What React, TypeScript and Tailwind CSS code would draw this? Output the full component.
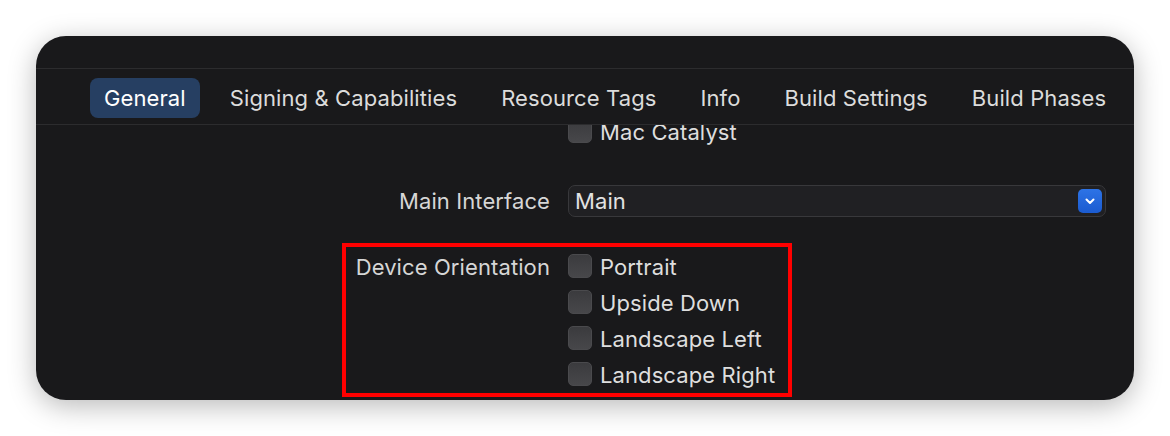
import React from "react";

const tabs = [
  "General",
  "Signing & Capabilities",
  "Resource Tags",
  "Info",
  "Build Settings",
  "Build Phases",
];

const orientations = ["Portrait", "Upside Down", "Landscape Left", "Landscape Right"];

function Checkbox() {
  return (
    <div className="h-[24px] w-[24px] shrink-0 rounded-[5px] border border-[#4a4a4d] bg-gradient-to-b from-[#3b3b3e] to-[#47474a]" />
  );
}

function CheckRow({ label }: { label: string }) {
  return (
    <div className="flex h-[24px] items-center gap-[8px]">
      <Checkbox />
      <span className="pt-[1px] text-[22px] leading-none tracking-[0.1px] text-[#dedede]">{label}</span>
    </div>
  );
}

export default function App() {
  return (
    <div
      className="h-[436px] w-[1170px] bg-white pl-[36px] pt-[36px]"
      style={{ fontFamily: "Inter, 'Noto Sans', sans-serif" }}
    >
      <div className="flex h-[364px] w-[1098px] flex-col overflow-hidden rounded-[30px] bg-[#19191b] shadow-[0_6px_28px_rgba(0,0,0,0.28)]">
        {/* title strip */}
        <div className="h-[33px] shrink-0 border-b border-[#2c2c2e]" />

        {/* tab bar */}
        <div className="flex h-[56px] shrink-0 items-start gap-[16px] border-b border-[#2c2c2e] pl-[54px] pt-[9px]">
          {tabs.map((t, i) => (
            <div
              key={t}
              className={
                i === 0
                  ? "flex h-[40px] items-center rounded-[8px] bg-[#263f62] px-[14px] text-[22px] tracking-[0.1px] text-white"
                  : "flex h-[40px] items-center px-[14px] text-[22px] tracking-[0.1px] text-[#dcdcdc]"
              }
            >
              {t}
            </div>
          ))}
        </div>

        {/* settings */}
        <div className="flex-1 overflow-hidden">
          <div className="-mt-[6px] grid grid-cols-[514px_1fr] gap-x-[18px]">
            <div />
            <CheckRow label="Mac Catalyst" />

            <div className="mt-[42px] flex h-[32px] items-center justify-end pt-[1px] text-[22px] tracking-[0.1px] text-[#d6d6d6]">
              Main Interface
            </div>
            <div className="mt-[42px] mr-[28px] flex h-[32px] items-center justify-between rounded-[7px] border border-[#38383b] bg-[#202023] pl-[6px] pr-[3px]">
              <span className="pt-[1px] text-[22px] tracking-[0.1px] text-[#e2e2e2]">Main</span>
              <div className="flex h-[24px] w-[24px] items-center justify-center rounded-[5px] bg-gradient-to-b from-[#2d73e6] to-[#1b5bd0]">
                <svg width="10" height="7" viewBox="0 0 10 7" fill="none">
                  <path d="M1.5 1.5 L5 5 L8.5 1.5" stroke="white" strokeWidth="2" strokeLinecap="round" strokeLinejoin="round" />
                </svg>
              </div>
            </div>
          </div>

          {/* device orientation */}
          <div className="relative mt-[37px] grid grid-cols-[514px_1fr] gap-x-[18px]">
            <div className="flex h-[24px] items-center justify-end pt-[1px] text-[22px] leading-none tracking-[0.1px] text-[#d6d6d6]">
              Device Orientation
            </div>
            <div className="flex flex-col gap-[12px]">
              {orientations.map((o) => (
                <CheckRow key={o} label={o} />
              ))}
            </div>
            <div className="pointer-events-none absolute left-[306px] top-[-11px] h-[154px] w-[450px] border-[4px] border-[#ff0000]" />
          </div>
        </div>
      </div>
    </div>
  );
}
